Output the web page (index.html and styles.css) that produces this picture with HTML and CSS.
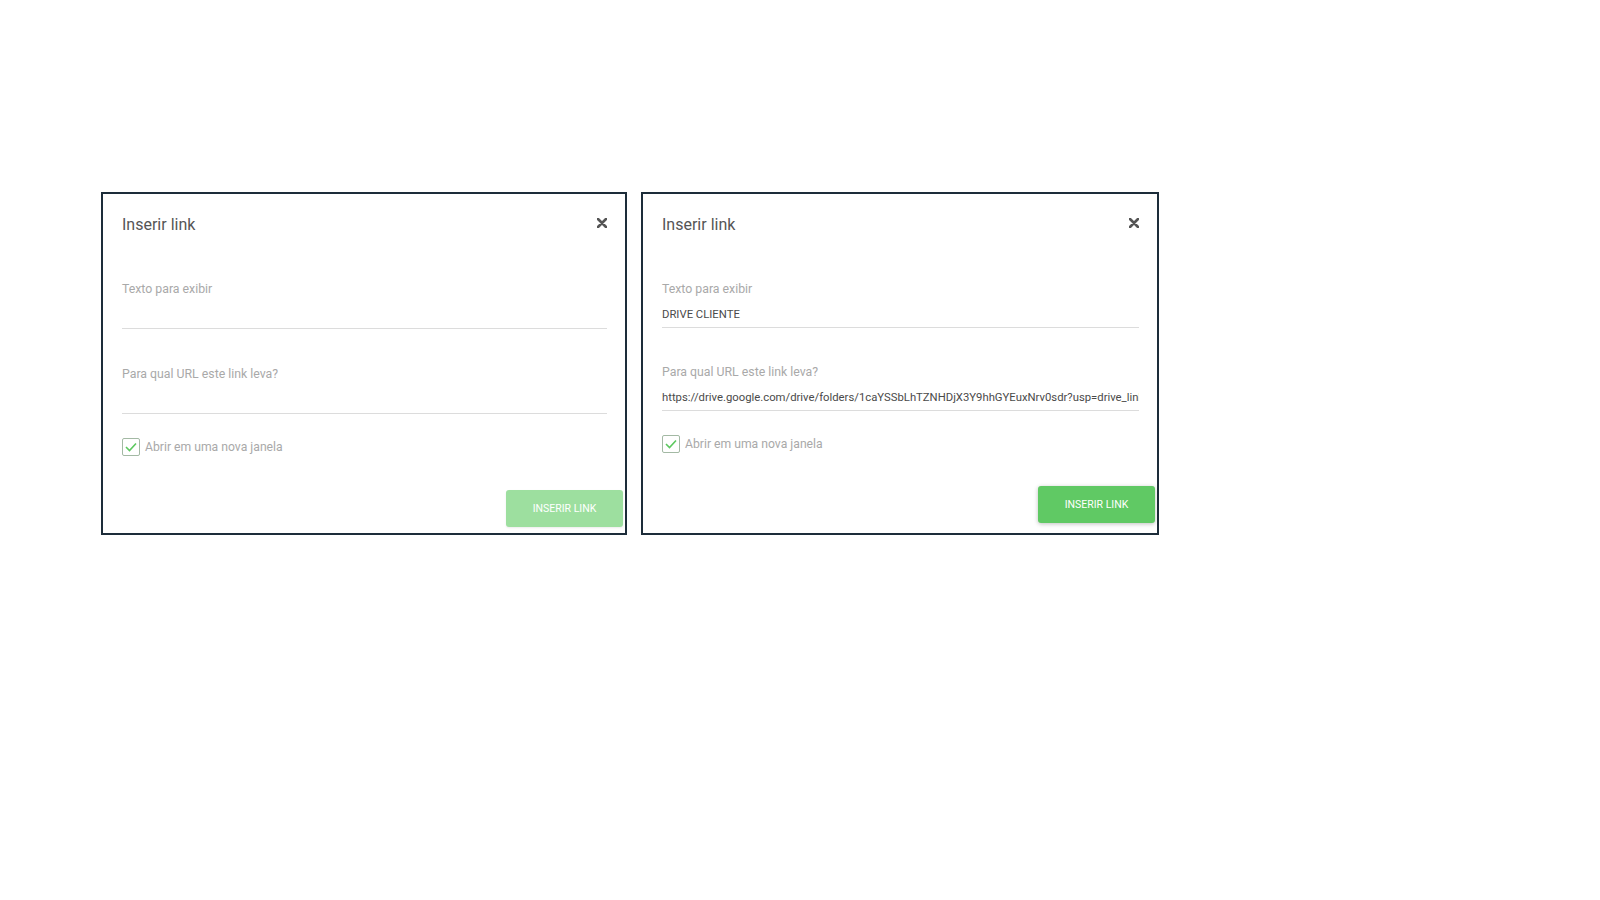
FILE: index.html
```html
<!DOCTYPE html>
<html lang="pt-BR">
<head>
  <meta charset="UTF-8">
  <title>Inserir link</title>
  <link rel="stylesheet" href="styles.css">
</head>
<body>

  <div class="dialogos">

    <!-- vazio -->
    <div class="dialogo largo">
      <div class="topo">
        <h2>Inserir link</h2>
        <span class="fechar">
          <svg width="10" height="10" viewBox="0 0 10 10"><path d="M1 1 L9 9 M9 1 L1 9" stroke="#555" stroke-width="2.6" stroke-linecap="round"/></svg>
        </span>
      </div>

      <div class="campo primeiro">
        <label>Texto para exibir</label>
        <input type="text" value="">
      </div>

      <div class="campo">
        <label>Para qual URL este link leva?</label>
        <input type="text" value="">
      </div>

      <div class="opcao">
        <span class="caixa">
          <svg width="12" height="10" viewBox="0 0 12 10"><path d="M1 5 L4.5 8.5 L11 1.5" fill="none" stroke="#5cc85f" stroke-width="1.6"/></svg>
        </span>
        Abrir em uma nova janela
      </div>

      <button class="inserir desativado">INSERIR LINK</button>
    </div>

    <!-- preenchido -->
    <div class="dialogo">
      <div class="topo">
        <h2>Inserir link</h2>
        <span class="fechar">
          <svg width="10" height="10" viewBox="0 0 10 10"><path d="M1 1 L9 9 M9 1 L1 9" stroke="#555" stroke-width="2.6" stroke-linecap="round"/></svg>
        </span>
      </div>

      <div class="campo primeiro">
        <label>Texto para exibir</label>
        <input type="text" value="DRIVE CLIENTE">
      </div>

      <div class="campo">
        <label>Para qual URL este link leva?</label>
        <input type="text" value="https://drive.google.com/drive/folders/1caYSSbLhTZNHDjX3Y9hhGYEuxNrv0sdr?usp=drive_link">
      </div>

      <div class="opcao">
        <span class="caixa">
          <svg width="12" height="10" viewBox="0 0 12 10"><path d="M1 5 L4.5 8.5 L11 1.5" fill="none" stroke="#5cc85f" stroke-width="1.6"/></svg>
        </span>
        Abrir em uma nova janela
      </div>

      <button class="inserir">INSERIR LINK</button>
    </div>

  </div>

</body>
</html>
```

FILE: styles.css
```css
body {
  margin: 0;
  background: #fff;
  font-family: Roboto, "Liberation Sans", Arial, sans-serif;
}

.dialogos {
  display: flex;
  gap: 14px;
  padding: 192px 0 0 101px;
}

.dialogo {
  box-sizing: border-box;
  width: 518px;
  height: 343px;
  border: 2px solid #1d2d3a;
  padding: 0 18px 6px 19px;
  display: flex;
  flex-direction: column;
  background: #fff;
}

.dialogo.largo {
  width: 526px;
}

.topo {
  display: flex;
  justify-content: space-between;
  align-items: center;
  margin-top: 21px;
  height: 20px;
}

.topo h2 {
  margin: 0;
  font-size: 16px;
  font-weight: 400;
  color: #555;
  line-height: 20px;
}

.fechar {
  display: flex;
  margin-right: 0;
  margin-top: -5px;
}

.campo {
  display: flex;
  flex-direction: column;
  margin-top: 36px;
}

.campo.primeiro {
  margin-top: 46px;
}

.largo .campo {
  margin-top: 37px;
}

.largo .campo.primeiro {
  margin-top: 46px;
}

.largo .campo input {
  height: 27px;
}

.campo label {
  font-size: 12.3px;
  color: #a9a9a9;
  line-height: 16px;
}

.campo input {
  margin-top: 4px;
  height: 26px;
  padding: 0;
  border: none;
  border-bottom: 1px solid #dcdcdc;
  outline: none;
  font-family: inherit;
  font-size: 11.3px;
  color: #4a4a4a;
  background: transparent;
}

.opcao {
  display: flex;
  align-items: center;
  gap: 5px;
  margin-top: 24px;
  font-size: 12.2px;
  color: #a9a9a9;
  line-height: 18px;
}

.caixa {
  box-sizing: border-box;
  width: 18px;
  height: 18px;
  border: 1.5px solid #a3b9a4;
  border-radius: 2px;
  display: flex;
  align-items: center;
  justify-content: center;
}

.inserir {
  margin-top: auto;
  margin-right: -16px;
  margin-bottom: 4px;
  align-self: flex-end;
  width: 117px;
  height: 37px;
  border: none;
  border-radius: 3px;
  background: #60c964;
  color: #fff;
  font-family: inherit;
  font-size: 10.5px;
  box-shadow: 0 1px 4px rgba(0, 0, 0, 0.25);
  cursor: pointer;
}

.inserir.desativado {
  background: #9ddf9f;
  box-shadow: 0 1px 2px rgba(0, 0, 0, 0.08);
  margin-bottom: 0;
}
```
